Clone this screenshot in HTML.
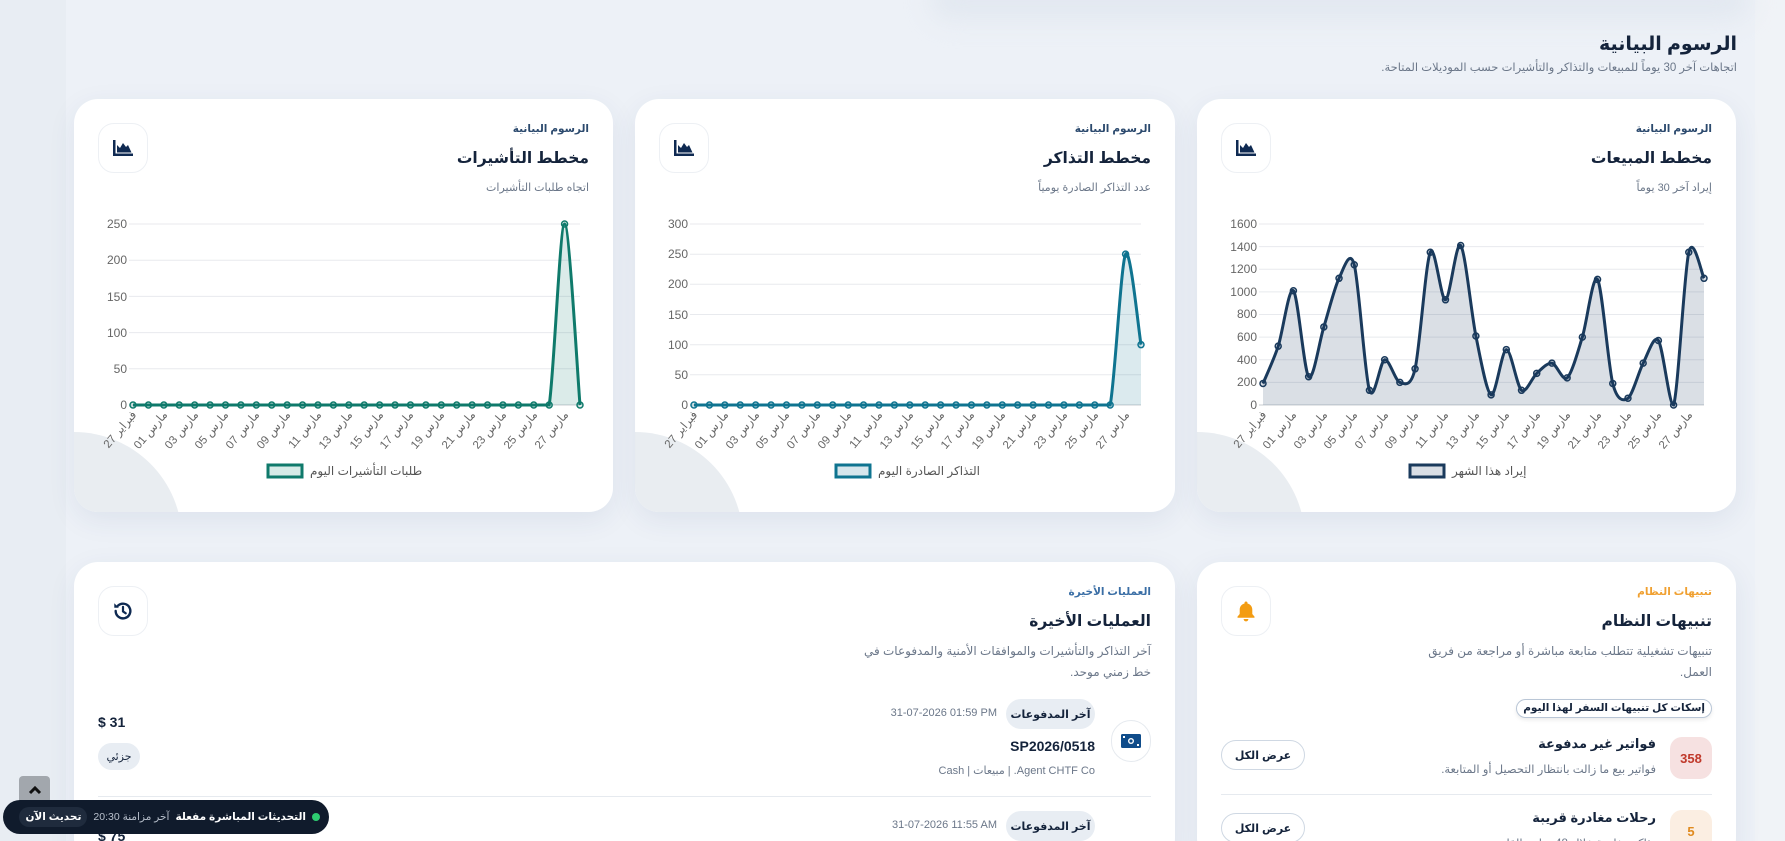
<!DOCTYPE html>
<html lang="ar" dir="rtl"><head><meta charset="utf-8">
<style>
*{box-sizing:border-box;margin:0;padding:0}
html,body{width:1785px;height:841px;overflow:hidden}
body{position:relative;font-family:"Liberation Sans","DejaVu Sans",sans-serif;background:#edf1f7;color:#14233b}
.bgl{position:absolute;left:0;top:0;width:66px;height:841px;background:#e8edf3}
.bgr{position:absolute;right:0;top:0;width:30px;height:841px;background:#f0f3f7}
.topsh{position:absolute;left:930px;top:-20px;width:820px;height:40px;border-radius:20px;background:#e2e8f0;filter:blur(12px)}
h1{position:absolute;right:48px;top:33px;font-size:19px;font-weight:bold;color:#14233b}
.sub{position:absolute;right:48px;top:60px;font-size:11.5px;color:#6b7789}
.card{position:absolute;background:#fff;border-radius:24px;box-shadow:0 8px 28px rgba(40,70,110,.08);overflow:hidden}
.ib{position:absolute;left:24px;top:24px;width:50px;height:50px;border:1px solid #edf0f4;border-radius:16px;background:#fff;display:flex;align-items:center;justify-content:center}
.lab{position:absolute;right:24px;top:24px;font-size:10.5px;font-weight:bold;color:#2c4a6e}
.tit{position:absolute;right:24px;top:50px;font-size:15.5px;font-weight:bold;color:#14233b}
.des{position:absolute;right:24px;top:79px;font-size:11px;color:#6b7789;line-height:21px}
.circ{position:absolute;left:-108px;top:333px;width:216px;height:216px;border-radius:50%;background:#e9edf1}
svg text{font-family:"Liberation Sans","DejaVu Sans",sans-serif}
.pill{position:absolute;border-radius:15px;background:#e8edf3;font-size:11px;font-weight:bold;color:#14233b;display:flex;align-items:center;justify-content:center}
.btn{position:absolute;left:24px;width:84px;height:30px;border:1px solid #cfd8e3;border-radius:15px;font-size:11px;font-weight:bold;color:#14233b;display:flex;align-items:center;justify-content:center;background:#fff}
</style></head><body>
<div class="bgl"></div><div class="bgr"></div><div class="topsh"></div>
<h1>الرسوم البيانية</h1>
<div class="sub">اتجاهات آخر 30 يوماً للمبيعات والتذاكر والتأشيرات حسب الموديلات المتاحة.</div>

<!-- Sales card -->
<div class="card" style="left:1197px;top:99px;width:539px;height:413px">
<div class="circ"></div>
<div class="ib"><svg width="22" height="18" viewBox="0 0 22 18"><path d="M1 1v16h20v-2.5H3.5V1z" fill="#0f2a52"/><path d="M5 13.5V6l3 3 3-5 3 4 2-2 3.5 7.5z" fill="#0f2a52"/></svg></div>
<div class="lab">الرسوم البيانية</div><div class="tit">مخطط المبيعات</div><div class="des">إيراد آخر 30 يوماً</div>
<svg id="c1" style="position:absolute;left:0;top:0;direction:ltr" width="539" height="413" font-size="12" fill="#666">
<g stroke="#e8eaee" stroke-width="1">
<line x1="62" x2="507" y1="125" y2="125"/><line x1="62" x2="507" y1="147.6" y2="147.6"/><line x1="62" x2="507" y1="170.3" y2="170.3"/><line x1="62" x2="507" y1="192.9" y2="192.9"/><line x1="62" x2="507" y1="215.5" y2="215.5"/><line x1="62" x2="507" y1="238.1" y2="238.1"/><line x1="62" x2="507" y1="260.8" y2="260.8"/><line x1="62" x2="507" y1="283.4" y2="283.4"/></g>
<line x1="62" x2="507" y1="306" y2="306" stroke="#c8ccd2"/>
<g text-anchor="end"><text x="60" y="129">1600</text><text x="60" y="152">1400</text><text x="60" y="174">1200</text><text x="60" y="197">1000</text><text x="60" y="219">800</text><text x="60" y="242">600</text><text x="60" y="265">400</text><text x="60" y="287">200</text><text x="60" y="310">0</text></g>
<g text-anchor="end" font-size="11.5">
<text transform="translate(70,316) rotate(-50)">فبراير 27</text><text transform="translate(100,316) rotate(-50)">مارس 01</text><text transform="translate(131,316) rotate(-50)">مارس 03</text><text transform="translate(161,316) rotate(-50)">مارس 05</text><text transform="translate(192,316) rotate(-50)">مارس 07</text><text transform="translate(222,316) rotate(-50)">مارس 09</text><text transform="translate(252,316) rotate(-50)">مارس 11</text><text transform="translate(283,316) rotate(-50)">مارس 13</text><text transform="translate(313,316) rotate(-50)">مارس 15</text><text transform="translate(344,316) rotate(-50)">مارس 17</text><text transform="translate(374,316) rotate(-50)">مارس 19</text><text transform="translate(405,316) rotate(-50)">مارس 21</text><text transform="translate(435,316) rotate(-50)">مارس 23</text><text transform="translate(465,316) rotate(-50)">مارس 25</text><text transform="translate(496,316) rotate(-50)">مارس 27</text></g>
<rect x="213" y="366" width="34" height="12" fill="#d9dee5" stroke="#1a3a5c" stroke-width="3"/>
<text x="255" y="376" font-size="12" fill="#555">إيراد هذا الشهر</text>
</svg></div>

<!-- Tickets card -->
<div class="card" style="left:635px;top:99px;width:540px;height:413px">
<div class="circ"></div>
<div class="ib"><svg width="22" height="18" viewBox="0 0 22 18"><path d="M1 1v16h20v-2.5H3.5V1z" fill="#0f2a52"/><path d="M5 13.5V6l3 3 3-5 3 4 2-2 3.5 7.5z" fill="#0f2a52"/></svg></div>
<div class="lab">الرسوم البيانية</div><div class="tit">مخطط التذاكر</div><div class="des">عدد التذاكر الصادرة يومياً</div>
<svg id="c2" style="position:absolute;left:0;top:0;direction:ltr" width="540" height="413" font-size="12" fill="#666">
<g stroke="#e8eaee"><line x1="55" x2="506" y1="125" y2="125"/><line x1="55" x2="506" y1="155.2" y2="155.2"/><line x1="55" x2="506" y1="185.3" y2="185.3"/><line x1="55" x2="506" y1="215.5" y2="215.5"/><line x1="55" x2="506" y1="245.7" y2="245.7"/><line x1="55" x2="506" y1="275.8" y2="275.8"/></g>
<line x1="55" x2="506" y1="306" y2="306" stroke="#c8ccd2"/>
<g text-anchor="end"><text x="53" y="129">300</text><text x="53" y="159">250</text><text x="53" y="189">200</text><text x="53" y="220">150</text><text x="53" y="250">100</text><text x="53" y="280">50</text><text x="53" y="310">0</text></g>
<g text-anchor="end" font-size="11.5">
<text transform="translate(63,316) rotate(-50)">فبراير 27</text><text transform="translate(94,316) rotate(-50)">مارس 01</text><text transform="translate(125,316) rotate(-50)">مارس 03</text><text transform="translate(155,316) rotate(-50)">مارس 05</text><text transform="translate(186,316) rotate(-50)">مارس 07</text><text transform="translate(217,316) rotate(-50)">مارس 09</text><text transform="translate(248,316) rotate(-50)">مارس 11</text><text transform="translate(279,316) rotate(-50)">مارس 13</text><text transform="translate(310,316) rotate(-50)">مارس 15</text><text transform="translate(340,316) rotate(-50)">مارس 17</text><text transform="translate(371,316) rotate(-50)">مارس 19</text><text transform="translate(402,316) rotate(-50)">مارس 21</text><text transform="translate(433,316) rotate(-50)">مارس 23</text><text transform="translate(464,316) rotate(-50)">مارس 25</text><text transform="translate(495,316) rotate(-50)">مارس 27</text></g>
<rect x="201" y="366" width="34" height="12" fill="#d6e6ec" stroke="#0f7490" stroke-width="3"/>
<text x="243" y="376" font-size="12" fill="#555">التذاكر الصادرة اليوم</text>
</svg></div>

<!-- Visas card -->
<div class="card" style="left:74px;top:99px;width:539px;height:413px">
<div class="circ"></div>
<div class="ib"><svg width="22" height="18" viewBox="0 0 22 18"><path d="M1 1v16h20v-2.5H3.5V1z" fill="#0f2a52"/><path d="M5 13.5V6l3 3 3-5 3 4 2-2 3.5 7.5z" fill="#0f2a52"/></svg></div>
<div class="lab">الرسوم البيانية</div><div class="tit">مخطط التأشيرات</div><div class="des">اتجاه طلبات التأشيرات</div>
<svg id="c3" style="position:absolute;left:0;top:0;direction:ltr" width="539" height="413" font-size="12" fill="#666">
<g stroke="#e8eaee"><line x1="55" x2="506" y1="125" y2="125"/><line x1="55" x2="506" y1="161.2" y2="161.2"/><line x1="55" x2="506" y1="197.4" y2="197.4"/><line x1="55" x2="506" y1="233.6" y2="233.6"/><line x1="55" x2="506" y1="269.8" y2="269.8"/></g>
<line x1="55" x2="506" y1="306" y2="306" stroke="#c8ccd2"/>
<g text-anchor="end"><text x="53" y="129">250</text><text x="53" y="165">200</text><text x="53" y="202">150</text><text x="53" y="238">100</text><text x="53" y="274">50</text><text x="53" y="310">0</text></g>
<g text-anchor="end" font-size="11.5">
<text transform="translate(63,316) rotate(-50)">فبراير 27</text><text transform="translate(94,316) rotate(-50)">مارس 01</text><text transform="translate(125,316) rotate(-50)">مارس 03</text><text transform="translate(155,316) rotate(-50)">مارس 05</text><text transform="translate(186,316) rotate(-50)">مارس 07</text><text transform="translate(217,316) rotate(-50)">مارس 09</text><text transform="translate(248,316) rotate(-50)">مارس 11</text><text transform="translate(279,316) rotate(-50)">مارس 13</text><text transform="translate(310,316) rotate(-50)">مارس 15</text><text transform="translate(340,316) rotate(-50)">مارس 17</text><text transform="translate(371,316) rotate(-50)">مارس 19</text><text transform="translate(402,316) rotate(-50)">مارس 21</text><text transform="translate(433,316) rotate(-50)">مارس 23</text><text transform="translate(464,316) rotate(-50)">مارس 25</text><text transform="translate(495,316) rotate(-50)">مارس 27</text></g>
<rect x="194" y="366" width="34" height="12" fill="#d6ebe7" stroke="#0f7a6b" stroke-width="3"/>
<text x="236" y="376" font-size="12" fill="#555">طلبات التأشيرات اليوم</text>
</svg></div>

<!-- Alerts card -->
<div class="card" style="left:1197px;top:562px;width:539px;height:300px">
<div class="ib"><svg width="20" height="22" viewBox="0 0 20 22"><path d="M10 1.5c.9 0 1.5.6 1.5 1.4v.6c3 .7 4.8 3.2 4.8 6.3v4.2l2.2 2.6v1.2H1.5v-1.2l2.2-2.6V9.8c0-3.1 1.8-5.6 4.8-6.3v-.6c0-.8.6-1.4 1.5-1.4zM7.6 19h4.8a2.4 2.4 0 0 1-4.8 0z" fill="#f39c12"/></svg></div>
<div class="lab" style="color:#f0a030">تنبيهات النظام</div>
<div class="tit">تنبيهات النظام</div>
<div class="des" style="width:290px;font-size:12px">تنبيهات تشغيلية تتطلب متابعة مباشرة أو مراجعة من فريق العمل.</div>
<div style="position:absolute;right:24px;top:137px;height:19px;padding:0 6px;border:1px solid #b9c6d6;border-radius:10px;font-size:10.5px;font-weight:bold;line-height:17px;box-shadow:0 2px 4px rgba(0,0,0,.08);white-space:nowrap">إسكات كل تنبيهات السفر لهذا اليوم</div>
<div class="pill" style="right:24px;top:175px;width:42px;height:42px;border-radius:12px;background:#f6e1e1;color:#c0392b;font-size:13px">358</div>
<div style="position:absolute;right:80px;top:174px;font-size:13px;font-weight:bold">فواتير غير مدفوعة</div>
<div style="position:absolute;right:80px;top:200px;font-size:11.5px;color:#6b7789">فواتير بيع ما زالت بانتظار التحصيل أو المتابعة.</div>
<div class="btn" style="top:178px">عرض الكل</div>
<div style="position:absolute;left:24px;right:24px;top:232px;border-top:1px solid #e6eaef"></div>
<div class="pill" style="right:24px;top:248px;width:42px;height:42px;border-radius:12px;background:#fbeee2;color:#e08a1e;font-size:13px">5</div>
<div style="position:absolute;right:80px;top:248px;font-size:13px;font-weight:bold">رحلات مغادرة قريبة</div>
<div style="position:absolute;right:80px;top:274px;font-size:11.5px;color:#6b7789">تذاكر مغادرة خلال 48 ساعة القادمة.</div>
<div class="btn" style="top:251px">عرض الكل</div>
</div>

<!-- Recent ops card -->
<div class="card" style="left:74px;top:562px;width:1101px;height:300px">
<div class="ib"><svg width="22" height="22" viewBox="0 0 24 24"><path d="M4 12a8 8 0 1 0 2.4-5.7" fill="none" stroke="#0f2a52" stroke-width="2.6" stroke-linecap="round"/><path d="M2.5 3.5v5h5z" fill="#0f2a52"/><path d="M12 7.5v5l3 2" fill="none" stroke="#0f2a52" stroke-width="2.4" stroke-linecap="round"/></svg></div>
<div class="lab" style="color:#3a6ea5">العمليات الأخيرة</div>
<div class="tit">العمليات الأخيرة</div>
<div class="des" style="width:300px;font-size:12px">آخر التذاكر والتأشيرات والموافقات الأمنية والمدفوعات في خط زمني موحد.</div>
<div style="position:absolute;right:24px;top:158px;width:40px;height:42px;border:1px solid #e6eaef;border-radius:20px;display:flex;align-items:center;justify-content:center"><svg width="20" height="14" viewBox="0 0 20 14"><rect x="0" y="0" width="20" height="14" rx="1.5" fill="#0f4c8a"/><circle cx="10" cy="7" r="3" fill="#fff"/><circle cx="10" cy="7" r="1.6" fill="#0f4c8a"/><rect x="2" y="2" width="2" height="2" fill="#fff"/><rect x="16" y="10" width="2" height="2" fill="#fff"/></svg></div>
<div class="pill" style="right:80px;top:137px;width:89px;height:30px">آخر المدفوعات</div>
<div style="position:absolute;right:178px;top:145px;font-size:11px;color:#6b7789;direction:ltr">31-07-2026 01:59 PM</div>
<div style="position:absolute;right:80px;top:176px;font-size:14px;font-weight:bold">SP2026/0518</div>
<div style="position:absolute;right:80px;top:202px;font-size:11px;color:#6b7789">Agent CHTF Co. | مبيعات | Cash</div>
<div style="position:absolute;left:24px;top:152px;font-size:14px;font-weight:bold;direction:ltr">$ 31</div>
<div class="pill" style="left:24px;top:181px;width:42px;height:27px;font-weight:normal">جزئي</div>
<div style="position:absolute;left:24px;right:24px;top:234px;border-top:1px solid #e6eaef"></div>
<div class="pill" style="right:80px;top:249px;width:89px;height:30px">آخر المدفوعات</div>
<div style="position:absolute;right:178px;top:257px;font-size:11px;color:#6b7789;direction:ltr">31-07-2026 11:55 AM</div>
<div style="position:absolute;left:24px;top:266px;font-size:14px;font-weight:bold;direction:ltr">$ 75</div>
</div>

<!-- scroll up -->
<div style="position:absolute;left:19px;top:776px;width:31px;height:28px;background:#a2a7ad;border-radius:4px;display:flex;align-items:center;justify-content:center"><svg width="14" height="10" viewBox="0 0 14 10"><path d="M2 8l5-5 5 5" fill="none" stroke="#111" stroke-width="3"/></svg></div>
<!-- live bar -->
<div style="position:absolute;left:3px;top:800px;width:326px;height:34px;background:#101b2c;border-radius:17px;display:flex;align-items:center;direction:rtl;padding:0 9px 0 6px;color:#fff;font-size:10.5px;white-space:nowrap">
<span style="width:8px;height:8px;border-radius:50%;background:#2ecc71;margin-left:6px;flex:none"></span>
<b style="margin-left:6px">التحديثات المباشرة مفعلة</b>
<span style="color:#b8c0cc;margin-left:6px">آخر مزامنة 20:30</span>
<span style="background:#1f2b3d;border-radius:12px;padding:4px 6px;font-weight:bold">تحديث الآن</span>
</div>

<script>
function pathOf(pts,t){let d='M'+pts[0][0]+','+pts[0][1];const cl=y=>Math.min(306,Math.max(120,y));for(let i=0;i<pts.length-1;i++){const p0=pts[i-1]||pts[i],p1=pts[i],p2=pts[i+1],p3=pts[i+2]||p2;d+=' C'+(p1[0]+(p2[0]-p0[0])*t)+','+cl(p1[1]+(p2[1]-p0[1])*t)+' '+(p2[0]-(p3[0]-p1[0])*t)+','+cl(p2[1]-(p3[1]-p1[1])*t)+' '+p2[0]+','+p2[1];}return d;}
function draw(id,vals,max,x0,x1,col,fill){const s=document.getElementById(id),ns='http://www.w3.org/2000/svg';const st=(x1-x0)/(vals.length-1);const pts=vals.map((v,i)=>[x0+i*st,306-v/max*181]);const d=pathOf(pts,0.15);
let a=document.createElementNS(ns,'path');a.setAttribute('d',d+' L'+x1+',306 L'+x0+',306Z');a.setAttribute('fill',fill);s.appendChild(a);
let l=document.createElementNS(ns,'path');l.setAttribute('d',d);l.setAttribute('fill','none');l.setAttribute('stroke',col);l.setAttribute('stroke-width','3');s.appendChild(l);
pts.forEach(p=>{let c=document.createElementNS(ns,'circle');c.setAttribute('cx',p[0]);c.setAttribute('cy',p[1]);c.setAttribute('r',3);c.setAttribute('fill',fill);c.setAttribute('stroke',col);c.setAttribute('stroke-width',1.5);s.appendChild(c);});}
draw('c1',[190,520,1010,250,690,1120,1240,130,400,200,320,1350,930,1410,610,90,490,130,280,370,240,600,1110,190,60,370,570,0,1350,1120],1600,66,507,'#1a3a5c','rgba(26,58,92,0.16)');
let z=new Array(28).fill(0);
draw('c2',z.concat([250,100]),300,59,506,'#0f7490','rgba(15,116,144,0.15)');
draw('c3',z.concat([250,0]),250,59,506,'#0f7a6b','rgba(15,122,107,0.15)');
</script>
</body></html>
